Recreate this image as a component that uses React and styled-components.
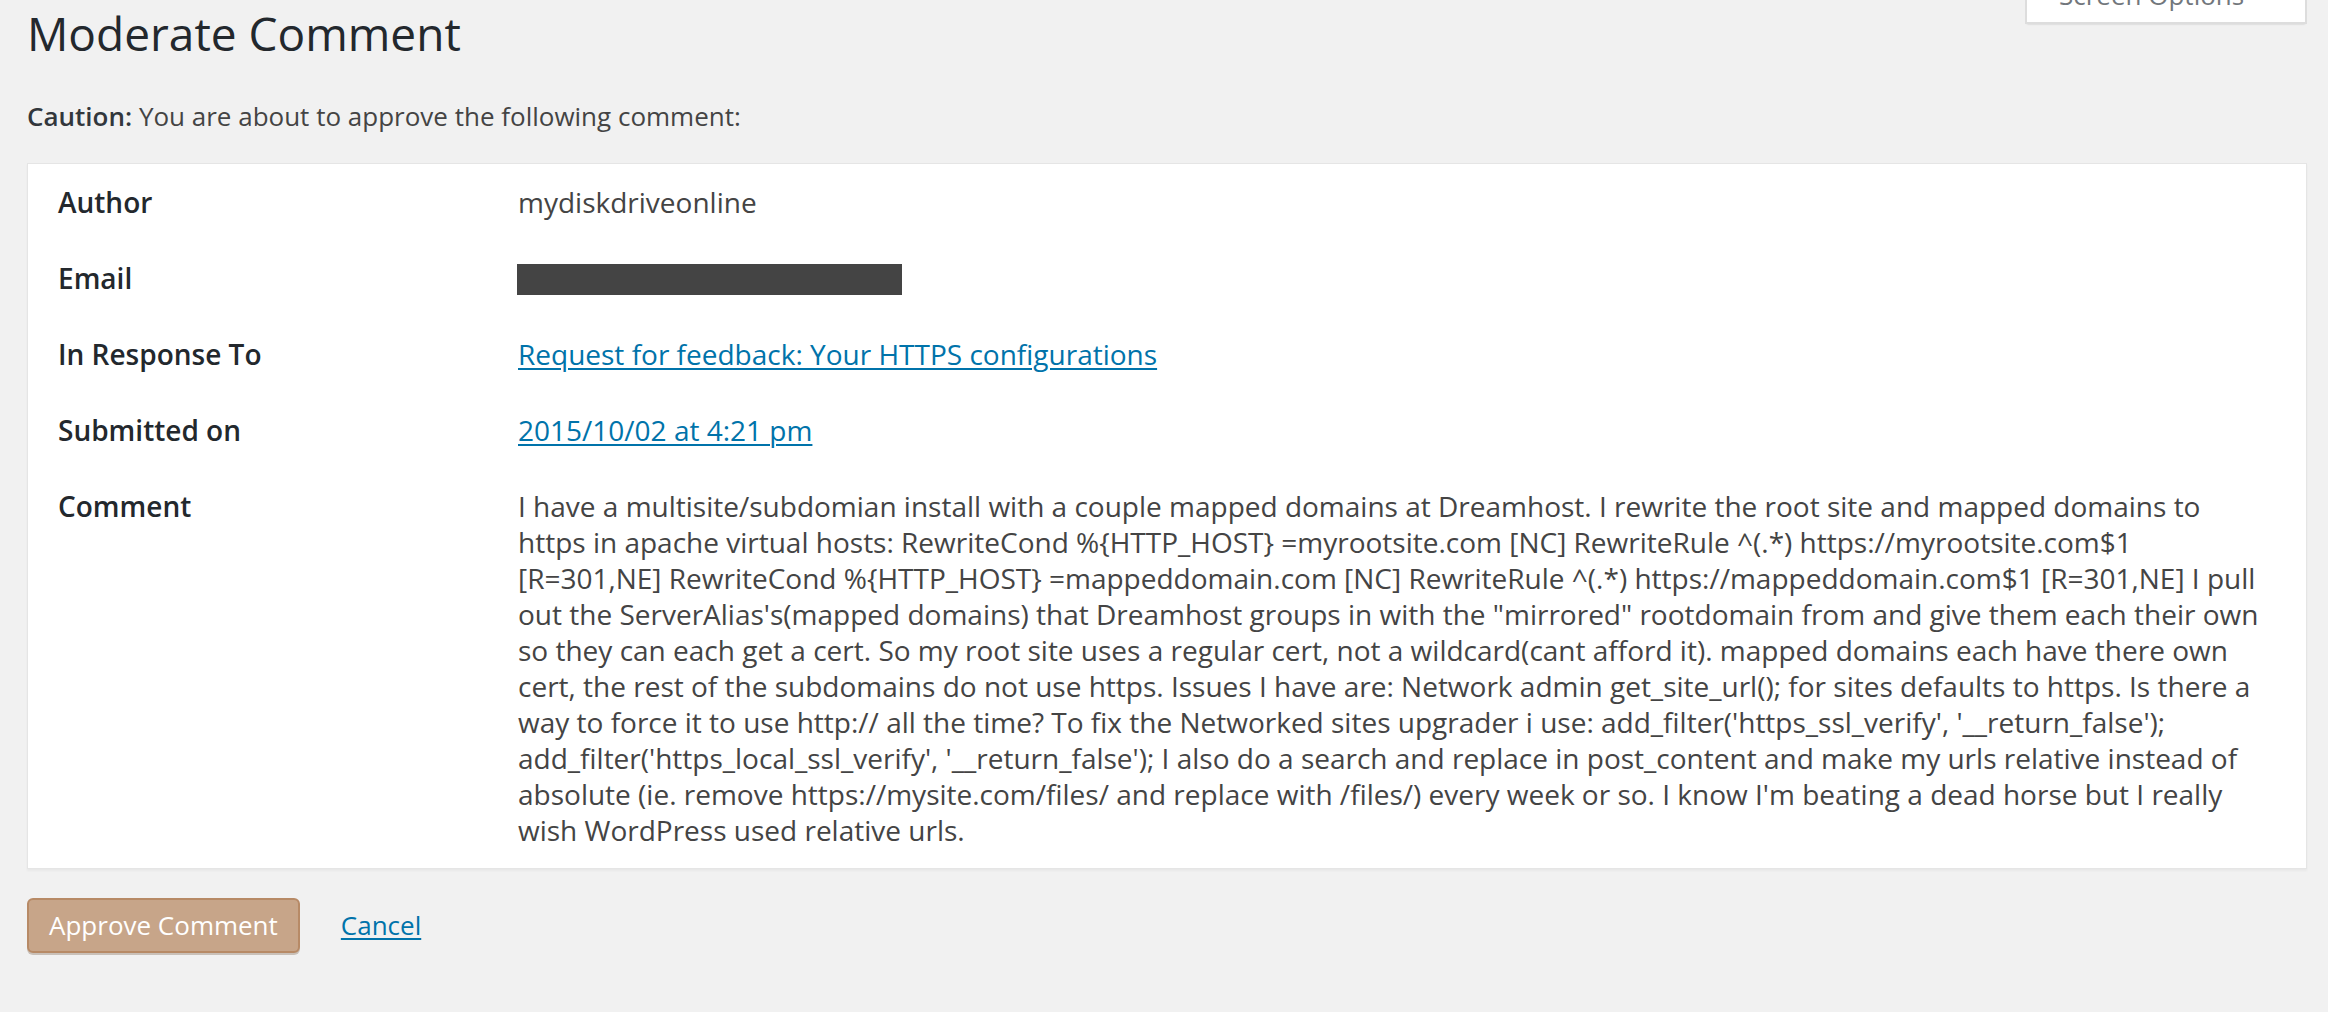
import React from "react";
import styled, { createGlobalStyle } from "styled-components";

const GlobalStyle = createGlobalStyle`
  html, body {
    margin: 0;
    padding: 0;
    background: #f1f1f1;
  }
  body {
    font-family: "Open Sans", "Liberation Sans", sans-serif;
    color: #444;
    overflow: hidden;
  }
`;

const Wrap = styled.div`
  padding: 0 21px 40px 27px;
`;

const Header = styled.div`
  display: flex;
  justify-content: space-between;
  align-items: flex-start;
`;

const Title = styled.h1`
  margin: 0;
  padding-top: 4px;
  font-size: 46px;
  line-height: 1.3;
  font-weight: 400;
  color: #23282d;
`;

const ScreenTab = styled.button`
  display: flex;
  align-items: center;
  gap: 14px;
  box-sizing: border-box;
  width: 282px;
  height: 56px;
  margin-top: -32px;
  padding: 6px 12px 6px 32px;
  background: #fff;
  border: 2px solid #ddd;
  border-top: none;
  box-shadow: 0 2px 2px -2px rgba(0, 0, 0, 0.2);
  font-family: inherit;
  font-size: 26px;
  line-height: 44px;
  color: #72777c;
  cursor: pointer;
`;

const Caution = styled.p`
  margin: 34px 0 29px;
  font-size: 26px;
  line-height: 36px;
  color: #444;

  strong {
    font-weight: 600;
    color: #32373c;
  }
`;

const Box = styled.div`
  background: #fff;
  border: 1px solid #e5e5e5;
  box-shadow: 0 2px 2px rgba(0, 0, 0, 0.04);
`;

const Row = styled.div`
  display: grid;
  grid-template-columns: 460px 1fr;
  font-size: 28px;
  line-height: 36px;
`;

const Label = styled.div`
  padding: 20px 30px;
  font-weight: 600;
  color: #23282d;
`;

const Value = styled.div`
  padding: 20px 30px;
  color: #444;
`;

const CommentLine = styled.span`
  display: block;
  white-space: nowrap;
`;

const Link = styled.a`
  color: #0073aa;
  text-decoration: underline;
  text-underline-offset: 3px;
  text-decoration-thickness: 2px;
`;

const Redacted = styled.div`
  width: 385px;
  height: 31px;
  margin: 4px 0 1px -1px;
  background: #444;
`;

const Actions = styled.div`
  display: flex;
  align-items: center;
  gap: 41px;
  margin-top: 29px;
`;

const PrimaryButton = styled.button`
  box-sizing: border-box;
  height: 55px;
  padding: 0 20px 2px;
  background: #c7a589;
  border: 2px solid #b78a66;
  border-radius: 6px;
  box-shadow: 0 2px 0 #c9c0b8;
  font-family: inherit;
  font-size: 26px;
  line-height: 50px;
  color: #fff;
  cursor: pointer;
`;

const CancelLink = styled(Link)`
  font-size: 26px;
`;

const Caret = () => (
  <svg width="14" height="14" viewBox="0 0 14 14" aria-hidden="true">
    <path d="M2 4 L7 10 L12 4 Z" fill="#72777c" />
  </svg>
);

const commentLines = [
  "I have a multisite/subdomian install with a couple mapped domains at Dreamhost. I rewrite the root site and mapped domains to",
  "https in apache virtual hosts: RewriteCond %{HTTP_HOST} =myrootsite.com [NC] RewriteRule ^(.*) https://myrootsite.com$1",
  "[R=301,NE] RewriteCond %{HTTP_HOST} =mappeddomain.com [NC] RewriteRule ^(.*) https://mappeddomain.com$1 [R=301,NE] I pull",
  "out the ServerAlias's(mapped domains) that Dreamhost groups in with the \"mirrored\" rootdomain from and give them each their own",
  "so they can each get a cert. So my root site uses a regular cert, not a wildcard(cant afford it). mapped domains each have there own",
  "cert, the rest of the subdomains do not use https. Issues I have are: Network admin get_site_url(); for sites defaults to https. Is there a",
  "way to force it to use http:// all the time? To fix the Networked sites upgrader i use: add_filter('https_ssl_verify', '__return_false');",
  "add_filter('https_local_ssl_verify', '__return_false'); I also do a search and replace in post_content and make my urls relative instead of",
  "absolute (ie. remove https://mysite.com/files/ and replace with /files/) every week or so. I know I'm beating a dead horse but I really",
  "wish WordPress used relative urls.",
];

export default function App() {
  return (
    <>
      <GlobalStyle />
      <Wrap>
        <Header>
          <Title>Moderate Comment</Title>
          <ScreenTab>
            Screen Options <Caret />
          </ScreenTab>
        </Header>

        <Caution>
          <strong>Caution:</strong> You are about to approve the following comment:
        </Caution>

        <Box>
          <Row>
            <Label>Author</Label>
            <Value>mydiskdriveonline</Value>
          </Row>
          <Row>
            <Label>Email</Label>
            <Value>
              <Redacted />
            </Value>
          </Row>
          <Row>
            <Label>In Response To</Label>
            <Value>
              <Link href="#">Request for feedback: Your HTTPS configurations</Link>
            </Value>
          </Row>
          <Row>
            <Label>Submitted on</Label>
            <Value>
              <Link href="#">2015/10/02 at 4:21 pm</Link>
            </Value>
          </Row>
          <Row>
            <Label>Comment</Label>
            <Value>
              {commentLines.map((line, i) => (
                <CommentLine key={i}>{line}</CommentLine>
              ))}
            </Value>
          </Row>
        </Box>

        <Actions>
          <PrimaryButton>Approve Comment</PrimaryButton>
          <CancelLink href="#">Cancel</CancelLink>
        </Actions>
      </Wrap>
    </>
  );
}
